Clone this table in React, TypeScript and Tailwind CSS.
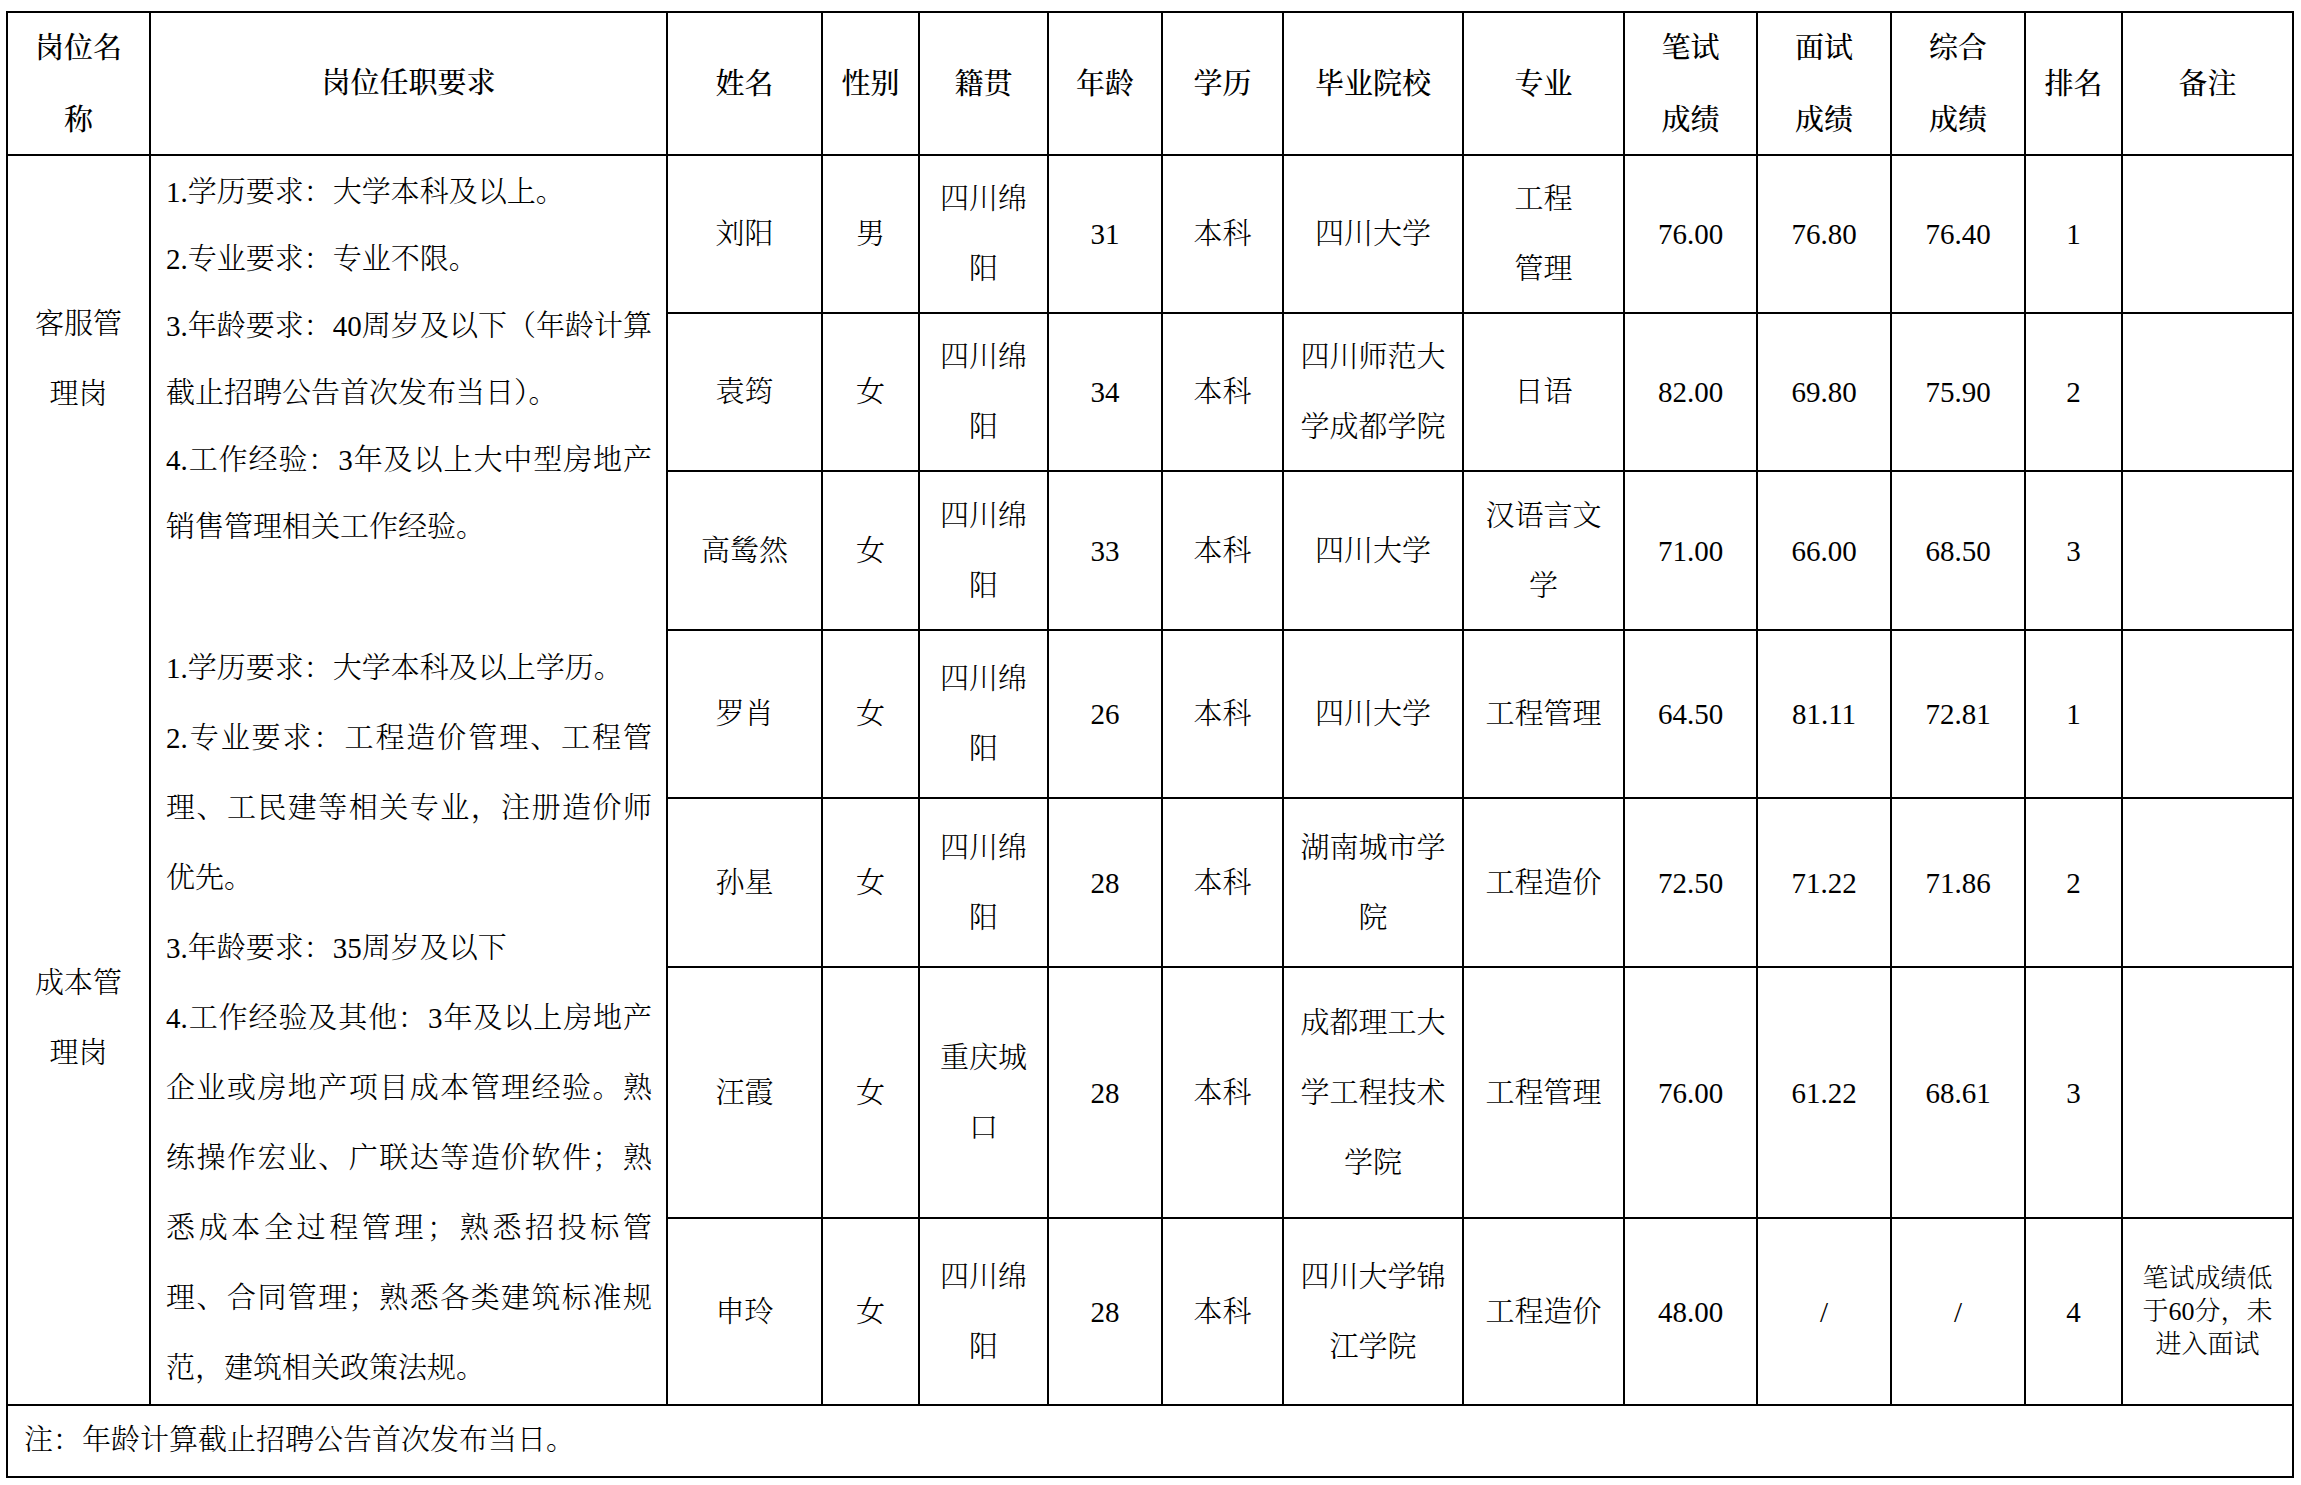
import React from "react";

type Cell = string | string[];

const font =
  "font-['Liberation_Serif','Noto_Serif_CJK_SC','Noto_Sans_CJK_SC',serif]";

function Lines({ v }: { v: Cell }) {
  const arr = Array.isArray(v) ? v : [v];
  return (
    <div className="leading-[70px]">
      {arr.map((t, i) => (
        <div key={i} className="whitespace-nowrap">
          {t}
        </div>
      ))}
    </div>
  );
}

const rows: Cell[][] = [
  ["刘阳", "男", ["四川绵", "阳"], "31", "本科", "四川大学", ["工程", "管理"], "76.00", "76.80", "76.40", "1", ""],
  ["袁筠", "女", ["四川绵", "阳"], "34", "本科", ["四川师范大", "学成都学院"], "日语", "82.00", "69.80", "75.90", "2", ""],
  ["高鸶然", "女", ["四川绵", "阳"], "33", "本科", "四川大学", ["汉语言文", "学"], "71.00", "66.00", "68.50", "3", ""],
  ["罗肖", "女", ["四川绵", "阳"], "26", "本科", "四川大学", "工程管理", "64.50", "81.11", "72.81", "1", ""],
  ["孙星", "女", ["四川绵", "阳"], "28", "本科", ["湖南城市学", "院"], "工程造价", "72.50", "71.22", "71.86", "2", ""],
  ["汪霞", "女", ["重庆城", "口"], "28", "本科", ["成都理工大", "学工程技术", "学院"], "工程管理", "76.00", "61.22", "68.61", "3", ""],
  ["申玲", "女", ["四川绵", "阳"], "28", "本科", ["四川大学锦", "江学院"], "工程造价", "48.00", "/", "/", "4", "REMARK"],
];

const headers: Cell[] = [
  "姓名",
  "性别",
  "籍贯",
  "年龄",
  "学历",
  "毕业院校",
  "专业",
  ["笔试", "成绩"],
  ["面试", "成绩"],
  ["综合", "成绩"],
  "排名",
  "备注",
];

type L = { t: string; j?: boolean };

const group1: L[] = [
  { t: "1.学历要求：大学本科及以上。" },
  { t: "2.专业要求：专业不限。" },
  { t: "3.年龄要求：40周岁及以下（年龄计算", j: true },
  { t: "截止招聘公告首次发布当日）。" },
  { t: "4.工作经验：3年及以上大中型房地产", j: true },
  { t: "销售管理相关工作经验。" },
  { t: "\u00a0" },
];

const group2: L[] = [
  { t: "1.学历要求：大学本科及以上学历。" },
  { t: "2.专业要求：工程造价管理、工程管", j: true },
  { t: "理、工民建等相关专业，注册造价师", j: true },
  { t: "优先。" },
  { t: "3.年龄要求：35周岁及以下" },
  { t: "4.工作经验及其他：3年及以上房地产", j: true },
  { t: "企业或房地产项目成本管理经验。熟", j: true },
  { t: "练操作宏业、广联达等造价软件；熟", j: true },
  { t: "悉成本全过程管理；熟悉招投标管", j: true },
  { t: "理、合同管理；熟悉各类建筑标准规", j: true },
  { t: "范，建筑相关政策法规。" },
];

function Req({ lines, lh }: { lines: L[]; lh: string }) {
  return (
    <div className={`w-full ${lh}`}>
      {lines.map((l, i) => (
        <div
          key={i}
          className={
            l.j
              ? "whitespace-nowrap text-justify [text-align-last:justify]"
              : "whitespace-nowrap text-left"
          }
        >
          {l.t}
        </div>
      ))}
    </div>
  );
}

const cellBase =
  "border-r-2 border-b-2 border-black flex items-center justify-center text-center";

export default function App() {
  return (
    <div className={`bg-white pl-[6px] pt-[11px] text-black text-[29px] font-light ${font}`}>
      <div className="grid w-[2288px] grid-cols-[143px_517px_155px_97px_129px_114px_121px_180px_161px_133px_134px_134px_97px_171px] grid-rows-[143px_158px_158px_159px_168px_169px_251px_187px_72px] border-t-2 border-l-2 border-black">
        {/* header */}
        <div className={`${cellBase} font-medium`}>
          <div className="leading-[72px]">
            <div>岗位名</div>
            <div>称</div>
          </div>
        </div>
        <div className={`${cellBase} font-medium`}>岗位任职要求</div>
        {headers.map((h, i) => (
          <div key={i} className={`${cellBase} font-medium`}>
            <div className="leading-[72px]">
              {(Array.isArray(h) ? h : [h]).map((t, k) => (
                <div key={k} className="whitespace-nowrap">
                  {t}
                </div>
              ))}
            </div>
          </div>
        ))}

        {rows.map((r, ri) => (
          <React.Fragment key={ri}>
            {ri === 0 && (
              <>
                <div className="row-span-3 border-r-2 border-black flex items-center justify-center text-center">
                  <div className="leading-[70px]">
                    <div>客服管</div>
                    <div>理岗</div>
                    <div>&nbsp;</div>
                  </div>
                </div>
                <div className="row-span-3 border-r-2 border-black flex items-center pl-[15px] pr-[14px]">
                  <Req lines={group1} lh="leading-[67px]" />
                </div>
              </>
            )}
            {ri === 3 && (
              <>
                <div className="row-span-4 border-r-2 border-b-2 border-black flex items-center justify-center text-center">
                  <div className="leading-[70px]">
                    <div>成本管</div>
                    <div>理岗</div>
                  </div>
                </div>
                <div className="row-span-4 border-r-2 border-b-2 border-black flex items-center pl-[15px] pr-[14px]">
                  <Req lines={group2} lh="leading-[70px]" />
                </div>
              </>
            )}
            {r.map((c, ci) =>
              c === "REMARK" ? (
                <div key={ci} className={cellBase}>
                  <div className="text-[26px] leading-[33px]">
                    <div>笔试成绩低</div>
                    <div>于60分，未</div>
                    <div>进入面试</div>
                  </div>
                </div>
              ) : (
                <div key={ci} className={cellBase}>
                  <Lines v={c} />
                </div>
              )
            )}
          </React.Fragment>
        ))}

        <div className="col-span-full border-r-2 border-b-2 border-black flex items-center pl-[16px]">
          注：年龄计算截止招聘公告首次发布当日。
        </div>
      </div>
    </div>
  );
}
